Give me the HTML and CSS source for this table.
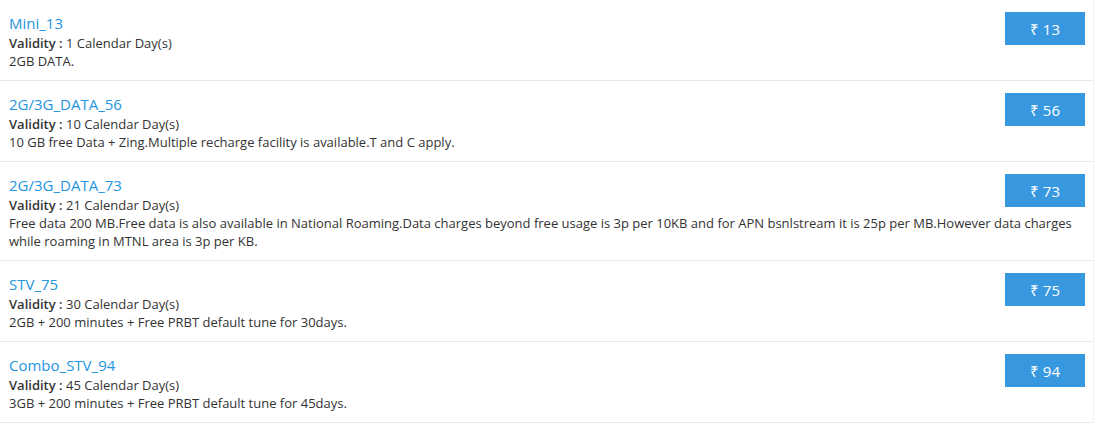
FILE: index.html
```html
<!DOCTYPE html>
<html>
<head>
<meta charset="utf-8">
<link rel="stylesheet" href="styles.css">
</head>
<body>
<div class="list">
  <div class="plan">
    <button class="price">₹ 13</button>
    <div class="title">Mini_13</div>
    <div class="line"><b>Validity :</b> 1 Calendar Day(s)</div>
    <div class="line">2GB DATA.</div>
  </div>
  <div class="plan">
    <button class="price">₹ 56</button>
    <div class="title">2G/3G_DATA_56</div>
    <div class="line"><b>Validity :</b> 10 Calendar Day(s)</div>
    <div class="line">10 GB free Data + Zing.Multiple recharge facility is available.T and C apply.</div>
  </div>
  <div class="plan">
    <button class="price">₹ 73</button>
    <div class="title">2G/3G_DATA_73</div>
    <div class="line"><b>Validity :</b> 21 Calendar Day(s)</div>
    <div class="line">Free data 200 MB.Free data is also available in National Roaming.Data charges beyond free usage is 3p per 10KB and for APN bsnlstream it is 25p per MB.However data charges while roaming in MTNL area is 3p per KB.</div>
  </div>
  <div class="plan">
    <button class="price">₹ 75</button>
    <div class="title">STV_75</div>
    <div class="line"><b>Validity :</b> 30 Calendar Day(s)</div>
    <div class="line">2GB + 200 minutes + Free PRBT default tune for 30days.</div>
  </div>
  <div class="plan">
    <button class="price">₹ 94</button>
    <div class="title">Combo_STV_94</div>
    <div class="line"><b>Validity :</b> 45 Calendar Day(s)</div>
    <div class="line">3GB + 200 minutes + Free PRBT default tune for 45days.</div>
  </div>
</div>
</body>
</html>
```
FILE: styles.css
```css
html, body {
  margin: 0;
  padding: 0;
  background: #fff;
}
body {
  font-family: "Open Sans", "Liberation Sans", sans-serif;
  color: #333;
}
.list {
  width: 1093px;
  border-right: 1px solid #f0f0f0;
}
.plan {
  padding: 12px 8px 10px 9px;
  border-bottom: 1px solid #e8e8e8;
}
.plan::after {
  content: "";
  display: block;
  clear: both;
}
.price {
  float: right;
  width: 80px;
  height: 33px;
  margin-left: 10px;
  border: none;
  background: #3898df;
  color: #fff;
  font-family: "Open Sans", "Liberation Sans", sans-serif;
  font-size: 15px;
  padding: 0;
}
.title {
  font-size: 15px;
  line-height: 22px;
  color: #2595e0;
}
.line {
  font-size: 13px;
  line-height: 18px;
}
.line b {
  font-weight: 600;
}
```
